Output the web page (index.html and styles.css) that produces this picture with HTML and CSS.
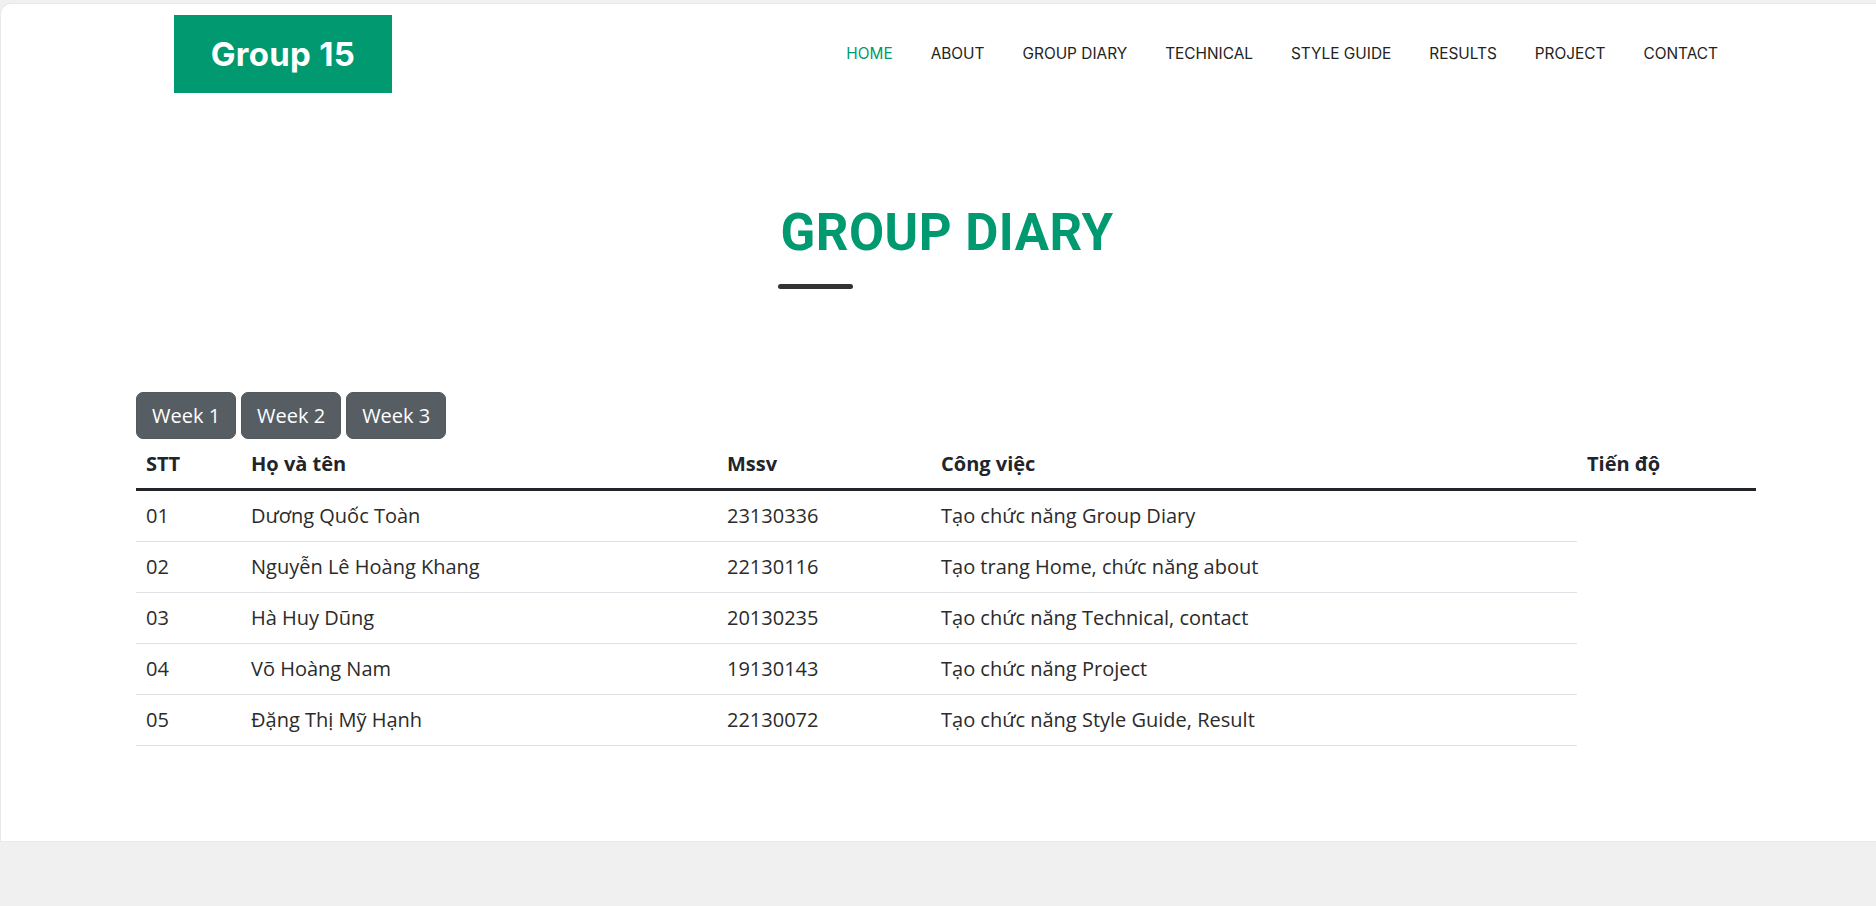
FILE: index.html
```html
<!DOCTYPE html>
<html lang="vi">
<head>
<meta charset="utf-8">
<title>Group Diary</title>
<link rel="stylesheet" href="styles.css">
</head>
<body>
<div class="card">
  <header class="header">
    <div class="logo">Group 15</div>
    <nav class="nav">
      <a class="nav-link active" href="#">HOME</a>
      <a class="nav-link" href="#">ABOUT</a>
      <a class="nav-link" href="#">GROUP DIARY</a>
      <a class="nav-link" href="#">TECHNICAL</a>
      <a class="nav-link" href="#">STYLE GUIDE</a>
      <a class="nav-link" href="#">RESULTS</a>
      <a class="nav-link" href="#">PROJECT</a>
      <a class="nav-link" href="#">CONTACT</a>
    </nav>
  </header>

  <section class="title-wrap">
    <div class="title-block">
      <h2 class="title">GROUP DIARY</h2>
      <div class="title-bar"></div>
    </div>
  </section>

  <section class="diary">
    <div class="weeks">
      <button class="btn">Week 1</button>
      <button class="btn">Week 2</button>
      <button class="btn">Week 3</button>
    </div>
    <table class="table">
      <colgroup>
        <col class="c1"><col class="c2"><col class="c3"><col class="c4"><col class="c5">
      </colgroup>
      <thead>
        <tr><th>STT</th><th>Họ và tên</th><th>Mssv</th><th>Công việc</th><th>Tiến độ</th></tr>
      </thead>
      <tbody>
        <tr><td>01</td><td>Dương Quốc Toàn</td><td>23130336</td><td>Tạo chức năng Group Diary</td></tr>
        <tr><td>02</td><td>Nguyễn Lê Hoàng Khang</td><td>22130116</td><td>Tạo trang Home, chức năng about</td></tr>
        <tr><td>03</td><td>Hà Huy Dũng</td><td>20130235</td><td>Tạo chức năng Technical, contact</td></tr>
        <tr><td>04</td><td>Võ Hoàng Nam</td><td>19130143</td><td>Tạo chức năng Project</td></tr>
        <tr><td>05</td><td>Đặng Thị Mỹ Hạnh</td><td>22130072</td><td>Tạo chức năng Style Guide, Result</td></tr>
      </tbody>
    </table>
  </section>
</div>
</body>
</html>
```

FILE: styles.css
```css
html, body {
  margin: 0;
  padding: 0;
}
body {
  background: #f0f0f0;
  overflow: hidden;
  font-family: "Open Sans", "Liberation Sans", sans-serif;
  color: #212529;
  height: 906px;
}
.card {
  width: 1890px;
  margin: 4px 0 0 1px;
  background: #fff;
  border-radius: 10px 0 0 0;
  box-shadow: 0 0 0 1px #e9e9e9;
  padding-bottom: 95px;
}
.header {
  width: 1544px;
  margin: 0 auto;
  padding-top: 11px;
  display: flex;
  align-items: center;
  justify-content: space-between;
}
.logo {
  width: 218px;
  height: 78px;
  background: #009970;
  color: #fff;
  font-family: Inter, "Noto Sans", sans-serif;
  font-weight: 700;
  font-size: 33px;
  display: flex;
  align-items: center;
  justify-content: center;
  letter-spacing: 0.3px;
}
.nav {
  display: flex;
  gap: 38px;
}
.nav-link {
  font-family: Inter, "Noto Sans", sans-serif;
  font-size: 15.4px;
  color: #232323;
  text-decoration: none;
  line-height: 24px;
}
.nav-link.active {
  color: #009970;
}
.title-wrap {
  text-align: center;
  margin-top: 110px;
}
.title-block {
  display: inline-block;
  text-align: left;
  margin-left: 2px;
}
.title {
  margin: 0;
  font-family: Roboto, "Liberation Sans", sans-serif;
  font-weight: 700;
  font-size: 51px;
  line-height: 60px;
  letter-spacing: 0.5px;
  color: #009970;
}
.title-bar {
  width: 75px;
  height: 5px;
  border-radius: 3px;
  background: #333;
  margin-top: 21px;
  margin-left: -2px;
}
.diary {
  width: 1620px;
  margin: 103px auto 0;
}
.weeks {
  display: flex;
  gap: 5px;
}
.btn {
  font-family: "Open Sans", "Liberation Sans", sans-serif;
  font-size: 20px;
  line-height: 30px;
  padding: 7.5px 15px;
  white-space: nowrap;
  color: #fff;
  background: #565e64;
  border: 1px solid #51585e;
  border-radius: 7px;
}
.table {
  width: 1620px;
  border-collapse: collapse;
  table-layout: fixed;
  font-size: 20px;
  line-height: 30px;
}
.c1 { width: 105px; }
.c2 { width: 476px; }
.c3 { width: 214px; }
.c4 { width: 646px; }
.c5 { width: 179px; }
.table th {
  text-align: left;
  font-weight: 700;
  padding: 10px 10px 9px;
  border-bottom: 3px solid #212529;
}
.table td {
  padding: 10px;
  border-bottom: 1px solid #dee2e6;
  color: #2b2b2b;
}
```
